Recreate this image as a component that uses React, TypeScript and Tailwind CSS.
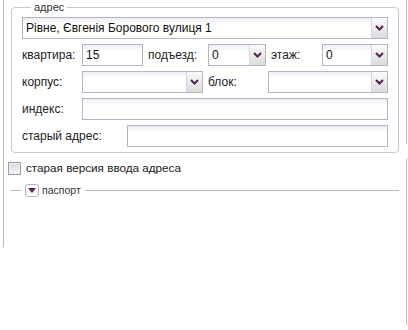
import React from 'react';

const font = { fontFamily: '"Liberation Sans", Arial, sans-serif' };

function Chevron() {
  return (
    <svg width="9" height="6" viewBox="0 0 9 6">
      <polyline points="1,1 4.5,4.5 8,1" fill="none" stroke="#5a2150" strokeWidth="2" />
    </svg>
  );
}

function Combo({ value, className }: { value?: string; className: string }) {
  return (
    <div
      className={`flex h-[22px] border border-[#b4b4c6] bg-[linear-gradient(to_bottom,#eceff0,#ffffff_7px)] ${className}`}
    >
      <div className="flex-1 flex items-center pl-[3px] text-[12px] text-[#111] truncate">{value}</div>
      <div className="w-[16px] flex items-center justify-center border-l border-[#d6d6de] bg-[linear-gradient(to_bottom,#fafafa,#dcdcdc)]">
        <Chevron />
      </div>
    </div>
  );
}

function Input({ value, className }: { value?: string; className: string }) {
  return (
    <div
      className={`flex items-center h-[22px] pl-[3px] border border-[#b4b4c6] bg-[linear-gradient(to_bottom,#eceff0,#ffffff_7px)] text-[12px] text-[#111] ${className}`}
    >
      {value}
    </div>
  );
}

export default function App() {
  return (
    <div className="flex w-[408px] h-[330px] bg-white overflow-hidden text-[#222]" style={font}>
      {/* left neighbour panel edge */}
      <div className="w-[4px] h-[248px] border-r border-[#b8b8cc] rounded-br-[3px] shrink-0" />

      <div className="flex-1 flex flex-col">
        <fieldset className="ml-[7px] mr-[1px] border border-[#c6c6d4] rounded-[4px] px-[10px] pb-[5px]">
          <legend className="ml-[9px] px-[3px] text-[11px] leading-[14px] text-[#333]">адрес</legend>
          <div className="flex flex-col gap-[5px] mt-[3px]">
            <Combo value="Рівне, Євгенія Борового вулиця 1" className="w-full" />

            <div className="flex items-center">
              <span className="w-[60px] text-[12px]">квартира:</span>
              <Input value="15" className="w-[61px]" />
              <span className="w-[65px] pl-[5px] text-[12px]">подъезд:</span>
              <Combo value="0" className="w-[58px]" />
              <span className="w-[56px] pl-[5px] text-[12px]">этаж:</span>
              <Combo value="0" className="flex-1" />
            </div>

            <div className="flex items-center">
              <span className="w-[60px] text-[12px]">корпус:</span>
              <Combo className="w-[121px]" />
              <span className="w-[65px] pl-[5px] text-[12px]">блок:</span>
              <Combo className="flex-1" />
            </div>

            <div className="flex items-center">
              <span className="w-[60px] text-[12px]">индекс:</span>
              <Input className="flex-1" />
            </div>

            <div className="flex items-center">
              <span className="w-[105px] text-[12px]">старый адрес:</span>
              <Input className="flex-1" />
            </div>
          </div>
        </fieldset>

        <label className="flex items-center mt-[7px] ml-[4px] h-[16px]">
          <span className="w-[13px] h-[13px] border border-[#9c9ca8] bg-[linear-gradient(to_bottom,#d9d9d9,#f4f4f4)] shadow-[inset_0_0_0_1px_#f2f2f2]" />
          <span className="ml-[5px] text-[11.7px] text-[#1a1a1a]">старая версия ввода адреса</span>
        </label>

        <div className="flex items-center mt-[8px] h-[13px]">
          <div className="ml-[6px] w-[11px] h-px bg-[#b8b8c8]" />
          <div className="ml-[4px] w-[14px] h-[13px] border border-[#b0b0c4] rounded-[3px] bg-white flex items-center justify-center">
            <svg width="8" height="5" viewBox="0 0 8 5">
              <polygon points="0,0 8,0 4,5" fill="#5a2150" />
            </svg>
          </div>
          <span className="ml-[3px] text-[10.5px] text-[#333]">паспорт</span>
          <div className="ml-[4px] mr-[1px] flex-1 h-px bg-[#b8b8c8]" />
        </div>
      </div>

      {/* right neighbour panel edges */}
      <div className="w-[8px] shrink-0 flex flex-col">
        <div className="ml-[6px] h-[144px] border-l border-[#b8b8cc] rounded-bl-[3px]" />
        <div className="ml-[6px] mt-[14px] h-[168px] border-l border-[#b8b8cc] rounded-l-[3px]" />
      </div>
    </div>
  );
}
